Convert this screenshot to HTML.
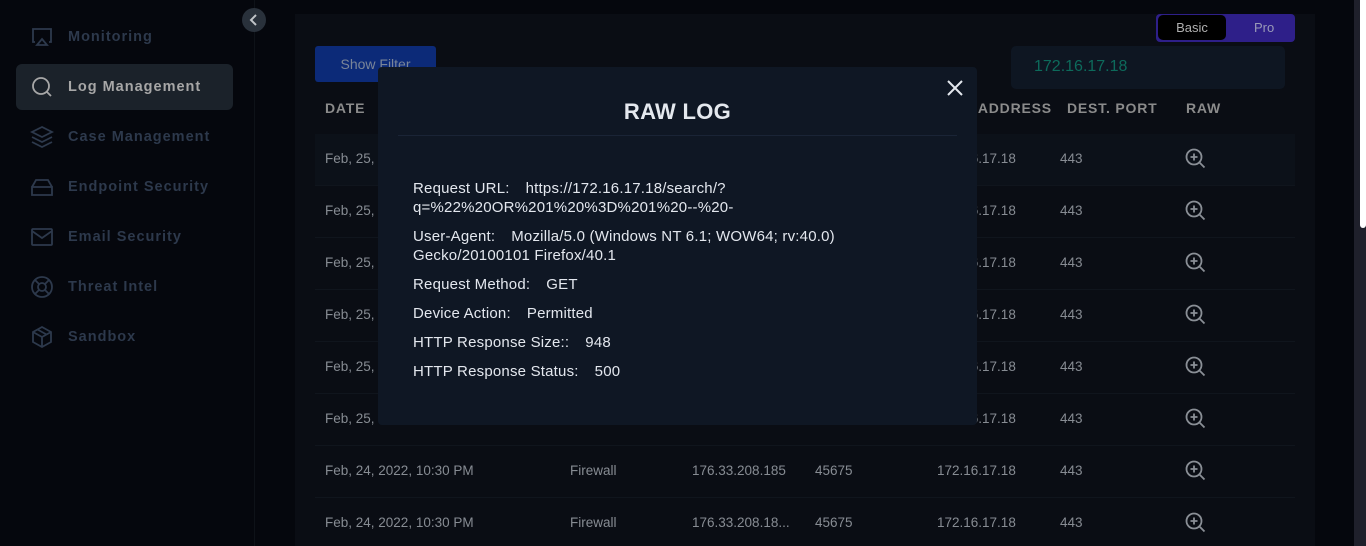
<!DOCTYPE html>
<html><head><style>
*{margin:0;padding:0;box-sizing:border-box}
html,body{width:1366px;height:546px;overflow:hidden}
body{background:#05070d;font-family:"Liberation Sans",sans-serif;position:relative}
.side{position:absolute;left:0;top:0;width:255px;height:546px;border-right:1px solid #0e1218}
.item{position:absolute;left:16px;width:217px;height:46px;display:flex;align-items:center;color:#2d394c;font-size:14.5px;font-weight:bold;letter-spacing:1px}
.item svg{position:absolute;left:14px}
.item span{position:absolute;left:52px}
.item.act{background:#1b222a;border-radius:6px;color:#a7a7a7}
.coll{position:absolute;left:242px;top:8px;width:24px;height:24px;border-radius:50%;background:#29313b}
.main{position:absolute;left:295px;top:14px;width:1020px;height:532px;background:#0a0d14}
.tog{position:absolute;left:1156px;top:14px;width:139px;height:28px;background:#2e1f89;border-radius:4px}
.tog .b{position:absolute;left:2px;top:1px;width:68px;height:25px;background:#000;border-radius:5px;color:#b0b0b0;font-size:13px;text-align:center;line-height:25px}
.tog .p{position:absolute;left:98px;top:0;color:#9a9ab8;font-size:13px;line-height:27px}
.search{position:absolute;left:1011px;top:46px;width:274px;height:43px;background:#0e1622;border-radius:5px;color:#0d6a5b;font-size:16px;padding:12px 0 0 23px}
.btn{position:absolute;left:315px;top:46px;width:121px;height:36px;background:#0c2a78;border-radius:3px;color:#7a8598;font-size:14px;text-align:center;line-height:36px}
.th{position:absolute;top:100px;color:#8b8b8b;font-size:14px;font-weight:bold;letter-spacing:.8px}
.row{position:absolute;left:315px;width:980px;height:52px;border-bottom:1px solid #10151d}
.c{position:absolute;color:#878c93;font-size:13.5px}
.mag{position:absolute;left:1185px}
.modal{position:absolute;left:378px;top:67px;width:599px;height:358px;background:#0f1724;border-radius:4px}
.modal h2{position:absolute;left:0;width:100%;top:32px;text-align:center;color:#e4e8ee;font-size:22px;font-weight:bold;letter-spacing:.3px}
.modal .hr{position:absolute;left:20px;right:20px;top:68px;border-top:1px solid #1a2436}
.modal .x{position:absolute;left:568px;top:12px}
.txt{position:absolute;left:35px;top:112px;width:540px;color:#e3e7ee;font-size:15px;line-height:19px;letter-spacing:.2px}
.txt p{margin-bottom:10px}
.sp{display:inline-block;width:16px}
.sb{position:absolute;left:1354px;top:0;width:12px;height:546px;background:#1f202b}
.thumb{position:absolute;left:1360px;top:0;width:6px;height:228px;background:#fff;border-radius:0 0 3px 3px}
</style></head><body>
<div class="side">
<div class="item" style="top:14px"><svg width="24" height="24" viewBox="0 0 24 24" fill="none" stroke="#2d394c" stroke-width="1.8"><path d="M5 17H3V4h18v13h-2"/><path d="M12 14l5 6H7z"/></svg><span>Monitoring</span></div>
<div class="item act" style="top:64px"><svg width="24" height="24" viewBox="0 0 24 24" fill="none" stroke="#a7a7a7" stroke-width="1.8"><circle cx="11" cy="11" r="8"/><path d="M17 17l4 4"/></svg><span>Log Management</span></div>
<div class="item" style="top:114px"><svg width="24" height="24" viewBox="0 0 24 24" fill="none" stroke="#2d394c" stroke-width="1.8"><path d="M12 2L2 7l10 5 10-5z"/><path d="M2 12l10 5 10-5M2 17l10 5 10-5"/></svg><span>Case Management</span></div>
<div class="item" style="top:164px"><svg width="24" height="24" viewBox="0 0 24 24" fill="none" stroke="#2d394c" stroke-width="1.8"><path d="M2 12h20v8H2z"/><path d="M2 12l4-7h12l4 7"/><path d="M6 16h.01M9 16h.01"/></svg><span>Endpoint Security</span></div>
<div class="item" style="top:214px"><svg width="24" height="24" viewBox="0 0 24 24" fill="none" stroke="#2d394c" stroke-width="1.8"><rect x="2" y="4" width="20" height="16" rx="1"/><path d="M2 6l10 7 10-7"/></svg><span>Email Security</span></div>
<div class="item" style="top:264px"><svg width="24" height="24" viewBox="0 0 24 24" fill="none" stroke="#2d394c" stroke-width="1.8"><circle cx="12" cy="12" r="10"/><circle cx="12" cy="12" r="4"/><path d="M5 5l4 4M15 15l4 4M19 5l-4 4M9 15l-4 4"/></svg><span>Threat Intel</span></div>
<div class="item" style="top:314px"><svg width="24" height="24" viewBox="0 0 24 24" fill="none" stroke="#2d394c" stroke-width="1.8"><path d="M12 2l9 5v10l-9 5-9-5V7z"/><path d="M3 7l9 5 9-5M12 12v10M7.5 4.5l9 5"/></svg><span>Sandbox</span></div>
</div>
<div class="coll"><svg width="24" height="24" viewBox="0 0 24 24"><path d="M14 7l-5 5 5 5" fill="none" stroke="#c0c4c8" stroke-width="2"/></svg></div>
<div class="main"></div>
<div class="tog"><div class="b">Basic</div><div class="p">Pro</div></div>
<div class="search">172.16.17.18</div>
<div class="btn">Show Filter</div>
<div class="th" style="left:325px">DATE</div>
<div class="th" style="left:930px">DEST. ADDRESS</div>
<div class="th" style="left:1067px">DEST. PORT</div>
<div class="th" style="left:1186px">RAW</div>
<div class="row" style="top:134px;background:#0c1119"></div>
<div class="row" style="top:186px"></div>
<div class="row" style="top:238px"></div>
<div class="row" style="top:290px"></div>
<div class="row" style="top:342px"></div>
<div class="row" style="top:394px"></div>
<div class="row" style="top:446px"></div>
<div class="row" style="top:498px"></div>
<div id="cells"></div>
<script>
var h='';var ys=[159,211,263,315,367,419,471,523];
var ic='<svg width="22" height="22" viewBox="0 0 22 22" fill="none" stroke="#8a8f96" stroke-width="1.8"><circle cx="9" cy="9" r="7.5"/><path d="M14.5 14.5l5 5M9 5.5v7M5.5 9h7"/></svg>';
ys.forEach(function(y,i){
var full=i>=6;
h+='<div class="c" style="left:325px;top:'+(y-8)+'px">'+(full?'Feb, 24, 2022, 10:30 PM':'Feb, 25,')+'</div>';
if(full){h+='<div class="c" style="left:570px;top:'+(y-8)+'px">Firewall</div><div class="c" style="left:692px;top:'+(y-8)+'px">'+(i==6?'176.33.208.185':'176.33.208.18...')+'</div><div class="c" style="left:815px;top:'+(y-8)+'px">45675</div>';}
h+='<div class="c" style="left:937px;top:'+(y-8)+'px">172.16.17.18</div><div class="c" style="left:1060px;top:'+(y-8)+'px">443</div><div class="mag" style="top:'+(y-11)+'px">'+ic+'</div>';
});
document.getElementById('cells').innerHTML=h;
</script>
<div class="modal">
<h2>RAW LOG</h2>
<svg class="x" width="18" height="18" viewBox="0 0 18 18"><path d="M2 2l14 14M16 2L2 16" stroke="#e4e8ee" stroke-width="2"/></svg>
<div class="hr"></div>
<div class="txt">
<p>Request URL:<span class="sp"></span>https://172.16.17.18/search/?<br>q=%22%20OR%201%20%3D%201%20--%20-</p>
<p>User-Agent:<span class="sp"></span>Mozilla/5.0 (Windows NT 6.1; WOW64; rv:40.0)<br>Gecko/20100101 Firefox/40.1</p>
<p>Request Method:<span class="sp"></span>GET</p>
<p>Device Action:<span class="sp"></span>Permitted</p>
<p>HTTP Response Size::<span class="sp"></span>948</p>
<p>HTTP Response Status:<span class="sp"></span>500</p>
</div>
</div>
<div class="sb"></div><div class="thumb"></div>
</body></html>
